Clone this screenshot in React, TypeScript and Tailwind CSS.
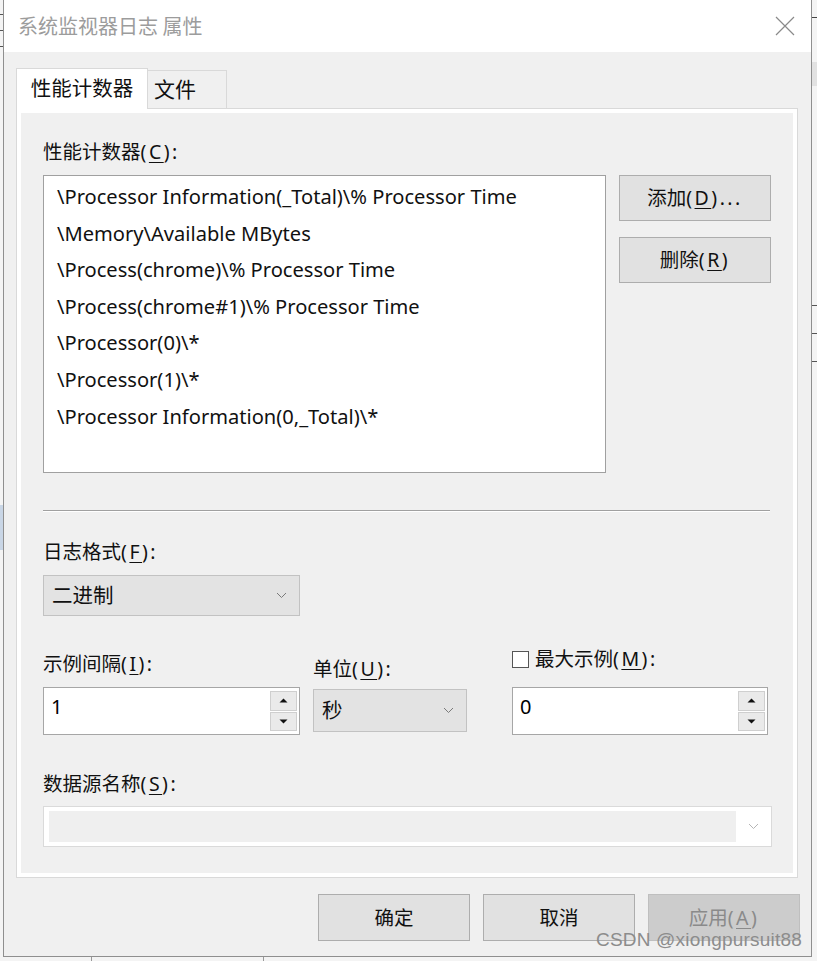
import React from "react";

const F = "font-['Noto_Sans','Noto_Sans_CJK_SC',sans-serif]";

function M({ c, tail = ":" }: { c: string; tail?: string }) {
  return (
    <span className="tracking-[2.5px]">
      (<span className="underline underline-offset-[3px] decoration-1">{c}</span>){tail}
    </span>
  );
}

function Chevron({ color = "#7a7a7a" }: { color?: string }) {
  return (
    <svg width="11" height="7" viewBox="0 0 11 7">
      <path d="M1 1 L5.5 5.5 L10 1" fill="none" stroke={color} strokeWidth="1" />
    </svg>
  );
}

function Spinner({ value }: { value: string }) {
  return (
    <div className="h-[48px] border border-[#a6a6a6] bg-white flex">
      <div className="flex-1 pl-[7px] pt-[7px] text-[20px] leading-[24px] text-black">{value}</div>
      <div className="w-[29px] flex flex-col gap-[1px] py-[3px] pr-[2px]">
        <div className="flex-1 bg-[#eaeaea] border border-[#cfcfcf] flex items-center justify-center">
          <svg width="9" height="5" viewBox="0 0 9 5"><path d="M0.5 4.5 L4.5 0.5 L8.5 4.5 Z" fill="#111" /></svg>
        </div>
        <div className="flex-1 bg-[#eaeaea] border border-[#cfcfcf] flex items-center justify-center">
          <svg width="9" height="5" viewBox="0 0 9 5"><path d="M0.5 0.5 L4.5 4.5 L8.5 0.5 Z" fill="#111" /></svg>
        </div>
      </div>
    </div>
  );
}

function Btn({ children, h = "h-[46px]", disabled = false }: { children: React.ReactNode; h?: string; disabled?: boolean }) {
  return (
    <div
      className={`w-[152px] ${h} flex items-center justify-center text-[19.5px] border ${
        disabled ? "bg-[#cccccc] border-[#bfbfbf] text-[#8a8a8a]" : "bg-[#e1e1e1] border-[#adadad] text-[#111]"
      }`}
    >
      {children}
    </div>
  );
}

export default function App() {
  const items = [
    "\\Processor Information(_Total)\\% Processor Time",
    "\\Memory\\Available MBytes",
    "\\Process(chrome)\\% Processor Time",
    "\\Process(chrome#1)\\% Processor Time",
    "\\Processor(0)\\*",
    "\\Processor(1)\\*",
    "\\Processor Information(0,_Total)\\*",
  ];
  return (
    <div className={`${F} relative w-[817px] h-[961px] overflow-hidden bg-[#f4f4f4]`}>
      {/* background window marks */}
      <div className="absolute left-0 top-[14px] w-[3px] h-[1px] bg-[#555]" />
      <div className="absolute left-0 top-[30px] w-[3px] h-[1px] bg-[#555]" />
      <div className="absolute left-0 top-[46px] w-[3px] h-[1px] bg-[#555]" />
      <div className="absolute left-0 top-[505px] w-[3px] h-[45px] bg-[#c9d6e6]" />
      <div className="absolute right-0 top-[17px] w-[5px] h-[1px] bg-[#444]" />
      <div className="absolute right-0 top-[62px] w-[5px] h-[24px] bg-[#e2e2e2]" />
      <div className="absolute right-0 top-[305px] w-[5px] h-[1px] bg-[#555]" />
      <div className="absolute right-0 top-[333px] w-[5px] h-[1px] bg-[#555]" />
      <div className="absolute right-0 top-[361px] w-[5px] h-[1px] bg-[#555]" />
      <div className="absolute left-[91px] top-[957px] w-[1px] h-[4px] bg-[#999]" />
      <div className="absolute left-[263px] top-[957px] w-[1px] h-[4px] bg-[#999]" />

      {/* dialog */}
      <div className="ml-[3px] w-[809px] h-[957px] border-x border-b border-[#8f8f8f] bg-[#f0f0f0] flex flex-col">
        {/* title bar */}
        <div className="h-[52px] bg-white flex items-center justify-between pl-[14px] pr-[16px] shrink-0">
          <div className="text-[20px] text-[#9c9c9c] font-['Noto_Sans_CJK_SC',sans-serif]">系统监视器日志 属性</div>
          <svg width="20" height="20" viewBox="0 0 20 20">
            <path d="M1 1 L19 19 M19 1 L1 19" stroke="#8a8a8a" strokeWidth="1.2" />
          </svg>
        </div>

        {/* tabs */}
        <div className="mt-[16px] ml-[12px] flex items-end h-[40px]">
          <div className="relative z-10 w-[132px] h-[41px] -mb-[1px] bg-white border-t border-x border-[#d9d9d9] flex items-center justify-center text-[20.5px] text-[#111] pb-[2px]">
            性能计数器
          </div>
          <div className="w-[79px] h-[38px] border-t border-r border-[#d9d9d9] flex items-center pl-[6px] text-[21px] text-[#111]">
            文件
          </div>
        </div>

        {/* panel */}
        <div className="ml-[12px] w-[782px] h-[770px] bg-white border border-[#d9d9d9] p-[4px]">
          <div className="h-full bg-[#f0f0f0] pl-[22px] flex flex-col text-[19.5px] text-[#111]">
            <div className="mt-[27px] leading-[24px]">
              性能计数器<M c="C" />
            </div>
            <div className="mt-[11px] flex">
              <div className="w-[563px] h-[298px] bg-white border border-[#a0a0a0] pl-[13px] pt-[3px]">
                {items.map((t) => (
                  <div key={t} className="h-[36.6px] leading-[36.6px] text-[20.1px] whitespace-nowrap">
                    {t}
                  </div>
                ))}
              </div>
              <div className="ml-[13px] flex flex-col gap-[16px]">
                <Btn>添加<M c="D" tail="..." /></Btn>
                <Btn>删除<M c="R" tail="" /></Btn>
              </div>
            </div>

            <div className="mt-[37px] w-[727px] border-t border-[#a0a0a0] border-b border-b-white" />

            <div className="mt-[28px] leading-[24px]">
              日志格式<M c="F" />
            </div>
            <div className="mt-[11px] w-[257px] h-[41px] bg-[#e3e3e3] border border-[#c2c2c2] flex items-center justify-between pl-[8px] pr-[12px]">
              <span className="text-[20.5px]">二进制</span>
              <Chevron />
            </div>

            <div className="mt-[28px] flex">
              <div className="w-[257px] flex flex-col">
                <div className="mt-[8px] leading-[24px]">
                  示例间隔<M c="I" />
                </div>
                <div className="mt-[11px]">
                  <Spinner value="1" />
                </div>
              </div>
              <div className="ml-[13px] w-[154px] flex flex-col">
                <div className="mt-[13px] leading-[24px]">
                  单位<M c="U" />
                </div>
                <div className="mt-[8px] h-[43px] bg-[#e3e3e3] border border-[#c2c2c2] flex items-center justify-between pl-[8px] pr-[12px]">
                  <span className="text-[20.5px]">秒</span>
                  <Chevron />
                </div>
              </div>
              <div className="ml-[45px] w-[256px] flex flex-col">
                <div className="mt-[3px] leading-[24px] flex items-center">
                  <span className="w-[17px] h-[17px] border border-[#555] bg-white mr-[6px]" />
                  <span>
                    最大示例<M c="M" />
                  </span>
                </div>
                <div className="mt-[16px]">
                  <Spinner value="0" />
                </div>
              </div>
            </div>

            <div className="mt-[37px] leading-[24px]">
              数据源名称<M c="S" />
            </div>
            <div className="mt-[10px] w-[729px] h-[41px] bg-white border border-[#dadada] flex items-center pl-[5px] pr-[12px]">
              <div className="flex-1 h-[31px] bg-[#efefef]" />
              <div className="ml-[12px]">
                <Chevron color="#b5b5b5" />
              </div>
            </div>
          </div>
        </div>

        {/* bottom buttons */}
        <div className="mt-[16px] flex justify-end pr-[11px] gap-[13px]">
          <Btn h="h-[47px]">确定</Btn>
          <Btn h="h-[47px]">取消</Btn>
          <Btn h="h-[47px]" disabled>
            应用<M c="A" tail="" />
          </Btn>
        </div>
      </div>

      <div className="absolute right-[15px] top-[929px] text-[19px] leading-[22px] text-[#8c8c8c] font-['Liberation_Sans',sans-serif] tracking-[0.2px]">
        CSDN @xiongpursuit88
      </div>
    </div>
  );
}
